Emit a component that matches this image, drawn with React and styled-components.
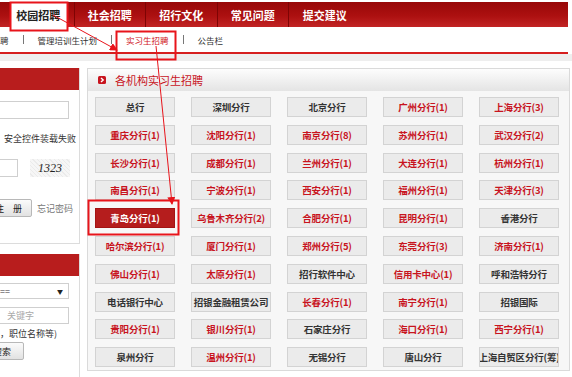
import React from "react";
import styled, { createGlobalStyle } from "styled-components";

const GlobalStyle = createGlobalStyle`
  body {
    margin: 0;
    background: #fff;
    font-family: "Noto Sans CJK SC", "Liberation Sans", sans-serif;
    overflow: hidden;
  }
`;

const tabs = ["校园招聘", "社会招聘", "招行文化", "常见问题", "提交建议"];

const branches = [
  ["总行"], ["深圳分行"], ["北京分行"], ["广州分行(1)", 1], ["上海分行(3)", 1],
  ["重庆分行(1)", 1], ["沈阳分行(1)", 1], ["南京分行(8)", 1], ["苏州分行(1)", 1], ["武汉分行(2)", 1],
  ["长沙分行(1)", 1], ["成都分行(1)", 1], ["兰州分行(1)", 1], ["大连分行(1)", 1], ["杭州分行(1)", 1],
  ["南昌分行(1)", 1], ["宁波分行(1)", 1], ["西安分行(1)", 1], ["福州分行(1)", 1], ["天津分行(3)", 1],
  ["青岛分行(1)", 2], ["乌鲁木齐分行(2)", 1], ["合肥分行(1)", 1], ["昆明分行(1)", 1], ["香港分行"],
  ["哈尔滨分行(1)", 1], ["厦门分行(1)", 1], ["郑州分行(5)", 1], ["东莞分行(3)", 1], ["济南分行(1)", 1],
  ["佛山分行(1)", 1], ["太原分行(1)", 1], ["招行软件中心"], ["信用卡中心(1)", 1], ["呼和浩特分行"],
  ["电话银行中心"], ["招银金融租赁公司"], ["长春分行(1)", 1], ["南宁分行(1)", 1], ["招银国际"],
  ["贵阳分行(1)", 1], ["银川分行(1)", 1], ["石家庄分行"], ["海口分行(1)", 1], ["西宁分行(1)", 1],
  ["泉州分行"], ["温州分行(1)", 1], ["无锡分行"], ["唐山分行"], ["上海自贸区分行(筹)"],
];

const App = () => {
  return (
    <Page>
      <GlobalStyle />
      <TopNav>
        {tabs.map((t, i) => (
          <Tab key={t} $last={i === tabs.length - 1}>
            <TabLabel $active={i === 0}>{t}</TabLabel>
          </Tab>
        ))}
      </TopNav>
      <SubNav>
        <SubItem>聘</SubItem>
        <SubSep />
        <SubItem>管理培训生计划</SubItem>
        <SubSep />
        <SubItem $active>实习生招聘</SubItem>
        <SubSep />
        <SubItem>公告栏</SubItem>
      </SubNav>
      <Band />
      <Body>
        <Sidebar>
          <LoginPanel>
            <RedHeader />
            <TextInput />
            <Notice>安全控件装载失败</Notice>
            <CaptchaRow>
              <SmallInput />
              <Captcha>1323</Captcha>
            </CaptchaRow>
            <ActionRow>
              <GrayButton $cut={14} $width={46} $pad={9}>注　册</GrayButton>
              <LinkText>忘记密码</LinkText>
            </ActionRow>
          </LoginPanel>
          <SearchPanel>
            <RedHeader />
            <Select>
              <span>==</span>
              <Caret>▼</Caret>
            </Select>
            <TextInput $h={17}>
              <Placeholder>关键字</Placeholder>
            </TextInput>
            <Hint>，职位名称等)</Hint>
            <GrayButton $cut={16} $width={40} $pad={12}>搜索</GrayButton>
          </SearchPanel>
        </Sidebar>
        <Main>
          <MainHeader>
            <HeadIcon>
              <svg width="8" height="8" viewBox="0 0 8 8">
                <rect width="8" height="8" rx="1.5" fill="#c8141e" />
                <path d="M3 2 L5.2 4 L3 6" stroke="#fff" strokeWidth="1.4" fill="none" />
              </svg>
            </HeadIcon>
            <MainTitle>各机构实习生招聘</MainTitle>
          </MainHeader>
          <Grid>
            {branches.map(([name, kind]) => (
              <Branch key={name} $kind={kind || 0}>
                {name}
              </Branch>
            ))}
          </Grid>
        </Main>
      </Body>
      <Overlay width="572" height="377" viewBox="0 0 572 377">
        <defs>
          <marker id="arr" markerWidth="8" markerHeight="8" refX="7" refY="4" orient="auto" markerUnits="userSpaceOnUse">
            <path d="M0 0 L8 4 L0 8 Z" fill="#e8141b" />
          </marker>
        </defs>
        <rect x="10.5" y="2.5" width="57" height="28" fill="none" stroke="#e8141b" strokeWidth="2" />
        <rect x="116.5" y="31.5" width="59" height="28" fill="none" stroke="#e8141b" strokeWidth="2" />
        <rect x="88.5" y="200.5" width="90" height="34" fill="none" stroke="#e8141b" strokeWidth="2" />
        <line x1="53" y1="15" x2="117" y2="50" stroke="#e8141b" strokeWidth="1" markerEnd="url(#arr)" />
        <line x1="156" y1="46" x2="172" y2="204" stroke="#e8141b" strokeWidth="1" markerEnd="url(#arr)" />
      </Overlay>
    </Page>
  );
};

const Page = styled.div`
  position: relative;
  width: 572px;
  height: 377px;
  overflow: hidden;
`;

const TopNav = styled.div`
  display: flex;
  margin-top: 2px;
  width: 565px;
  height: 25px;
  padding-left: 3px;
  background: linear-gradient(#980808, #ac1010 55%, #c22424);
`;

const Tab = styled.div`
  width: 71.5px;
  flex: none;
  display: flex;
  justify-content: center;
  border-right: ${({ $last }) => ($last ? "none" : "1px solid #7e0404")};
  box-sizing: border-box;
`;

const TabLabel = styled.div`
  width: 57px;
  margin-top: 1px;
  display: flex;
  align-items: center;
  justify-content: center;
  font-size: 11px;
  font-weight: bold;
  color: ${({ $active }) => ($active ? "#222" : "#fff")};
  background: ${({ $active }) => ($active ? "#fff" : "transparent")};
`;

const SubNav = styled.div`
  display: flex;
  align-items: center;
  gap: 14px;
  height: 25px;
  width: 568px;
  border-bottom: 2px solid #d61f1f;
  font-size: 8.5px;
  color: #333;
`;

const SubItem = styled.span`
  color: ${({ $active }) => ($active ? "#d0141c" : "#333")};
`;

const SubSep = styled.span`
  width: 1px;
  height: 9px;
  background: #777;
`;

const Band = styled.div`
  height: 7px;
  background: #eeeeee;
`;

const Body = styled.div`
  display: flex;
  gap: 7px;
  margin-top: 7px;
`;

const Sidebar = styled.div`
  width: 80px;
  flex: none;
  display: flex;
  flex-direction: column;
  gap: 10px;
`;

const Panel = styled.div`
  display: flex;
  flex-direction: column;
  align-items: flex-start;
  border-right: 1px solid #dcdcdc;
  background: #fff;
  overflow: hidden;
`;

const LoginPanel = styled(Panel)`
  height: 175px;
  border-bottom: 1px solid #dcdcdc;
`;

const SearchPanel = styled(Panel)`
  height: 140px;
`;

const RedHeader = styled.div`
  align-self: stretch;
  height: 22px;
  background: #b81d1d;
`;

const TextInput = styled.div`
  width: 69px;
  height: ${({ $h }) => $h || 18}px;
  margin-top: ${({ $h }) => ($h ? 8 : 11)}px;
  border: 1px solid #cfcfcf;
  border-left: none;
  box-sizing: border-box;
  display: flex;
  align-items: center;
`;

const Placeholder = styled.span`
  margin-left: 7px;
  font-size: 9px;
  color: #aaa;
`;

const Notice = styled.div`
  margin: 14px 0 0 4px;
  font-size: 9px;
  line-height: 12px;
  color: #333;
  white-space: nowrap;
`;

const CaptchaRow = styled.div`
  display: flex;
  align-items: center;
  gap: 12px;
  margin-top: 14px;
`;

const SmallInput = styled.div`
  width: 18px;
  height: 18px;
  border: 1px solid #cfcfcf;
  border-left: none;
  box-sizing: border-box;
`;

const Captcha = styled.div`
  width: 40px;
  height: 18px;
  display: flex;
  align-items: center;
  justify-content: center;
  background: repeating-linear-gradient(45deg, #f6f6f6 0 2px, #ebebeb 2px 3px);
  font-family: "Liberation Serif", serif;
  font-style: italic;
  font-size: 12px;
  color: #222;
`;

const ActionRow = styled.div`
  display: flex;
  align-items: center;
  gap: 5px;
  margin-top: 22px;
`;

const GrayButton = styled.div`
  width: ${({ $width }) => $width}px;
  height: 18px;
  margin-left: -${({ $cut }) => $cut}px;
  padding-right: ${({ $pad }) => $pad}px;
  display: flex;
  align-items: center;
  justify-content: flex-end;
  border: 1px solid #b8b8b8;
  border-radius: 2px;
  box-sizing: border-box;
  background: linear-gradient(#fbfbfb, #e2e2e2);
  font-size: 9px;
  color: #222;
  white-space: nowrap;
  flex: none;
`;

const LinkText = styled.span`
  font-size: 9px;
  color: #777;
  white-space: nowrap;
`;

const Select = styled.div`
  width: 69px;
  height: 16px;
  margin-top: 7px;
  display: flex;
  align-items: center;
  justify-content: space-between;
  padding-right: 5px;
  border: 1px solid #cfcfcf;
  border-left: none;
  box-sizing: border-box;
  font-size: 9px;
  color: #333;
`;

const Caret = styled.span`
  font-size: 6px;
  color: #222;
`;

const Hint = styled.div`
  margin: 4px 0 2px;
  font-size: 9px;
  line-height: 12px;
  color: #333;
  white-space: nowrap;
`;

const Main = styled.div`
  width: 483px;
  height: 303px;
  flex: none;
  border: 1px solid #dadada;
  box-sizing: border-box;
  background: #f7f7f7;
`;

const MainHeader = styled.div`
  display: flex;
  align-items: center;
  gap: 9px;
  height: 22px;
  padding-left: 10px;
  background: linear-gradient(#fdfdfd, #e4e4e4);
`;

const HeadIcon = styled.span`
  display: flex;
`;

const MainTitle = styled.span`
  font-size: 11px;
  color: #c8141e;
`;

const Grid = styled.div`
  display: grid;
  grid-template-columns: repeat(5, 80px);
  grid-auto-rows: 20px;
  column-gap: 16px;
  row-gap: 7.8px;
  padding: 6px 0 0 7px;
`;

const Branch = styled.div`
  display: flex;
  align-items: center;
  justify-content: center;
  overflow: hidden;
  white-space: nowrap;
  box-sizing: border-box;
  border: 1px solid ${({ $kind }) => ($kind === 2 ? "#a31414" : "#d3d3d3")};
  background: ${({ $kind }) => ($kind === 2 ? "#b51d1d" : "#ebebeb")};
  color: ${({ $kind }) => ($kind === 2 ? "#fff" : $kind === 1 ? "#c8141e" : "#333")};
  font-size: 9.5px;
  font-weight: bold;
  letter-spacing: -0.2px;
`;

const Overlay = styled.svg`
  position: absolute;
  left: 0;
  top: 0;
  pointer-events: none;
`;

export default App;
